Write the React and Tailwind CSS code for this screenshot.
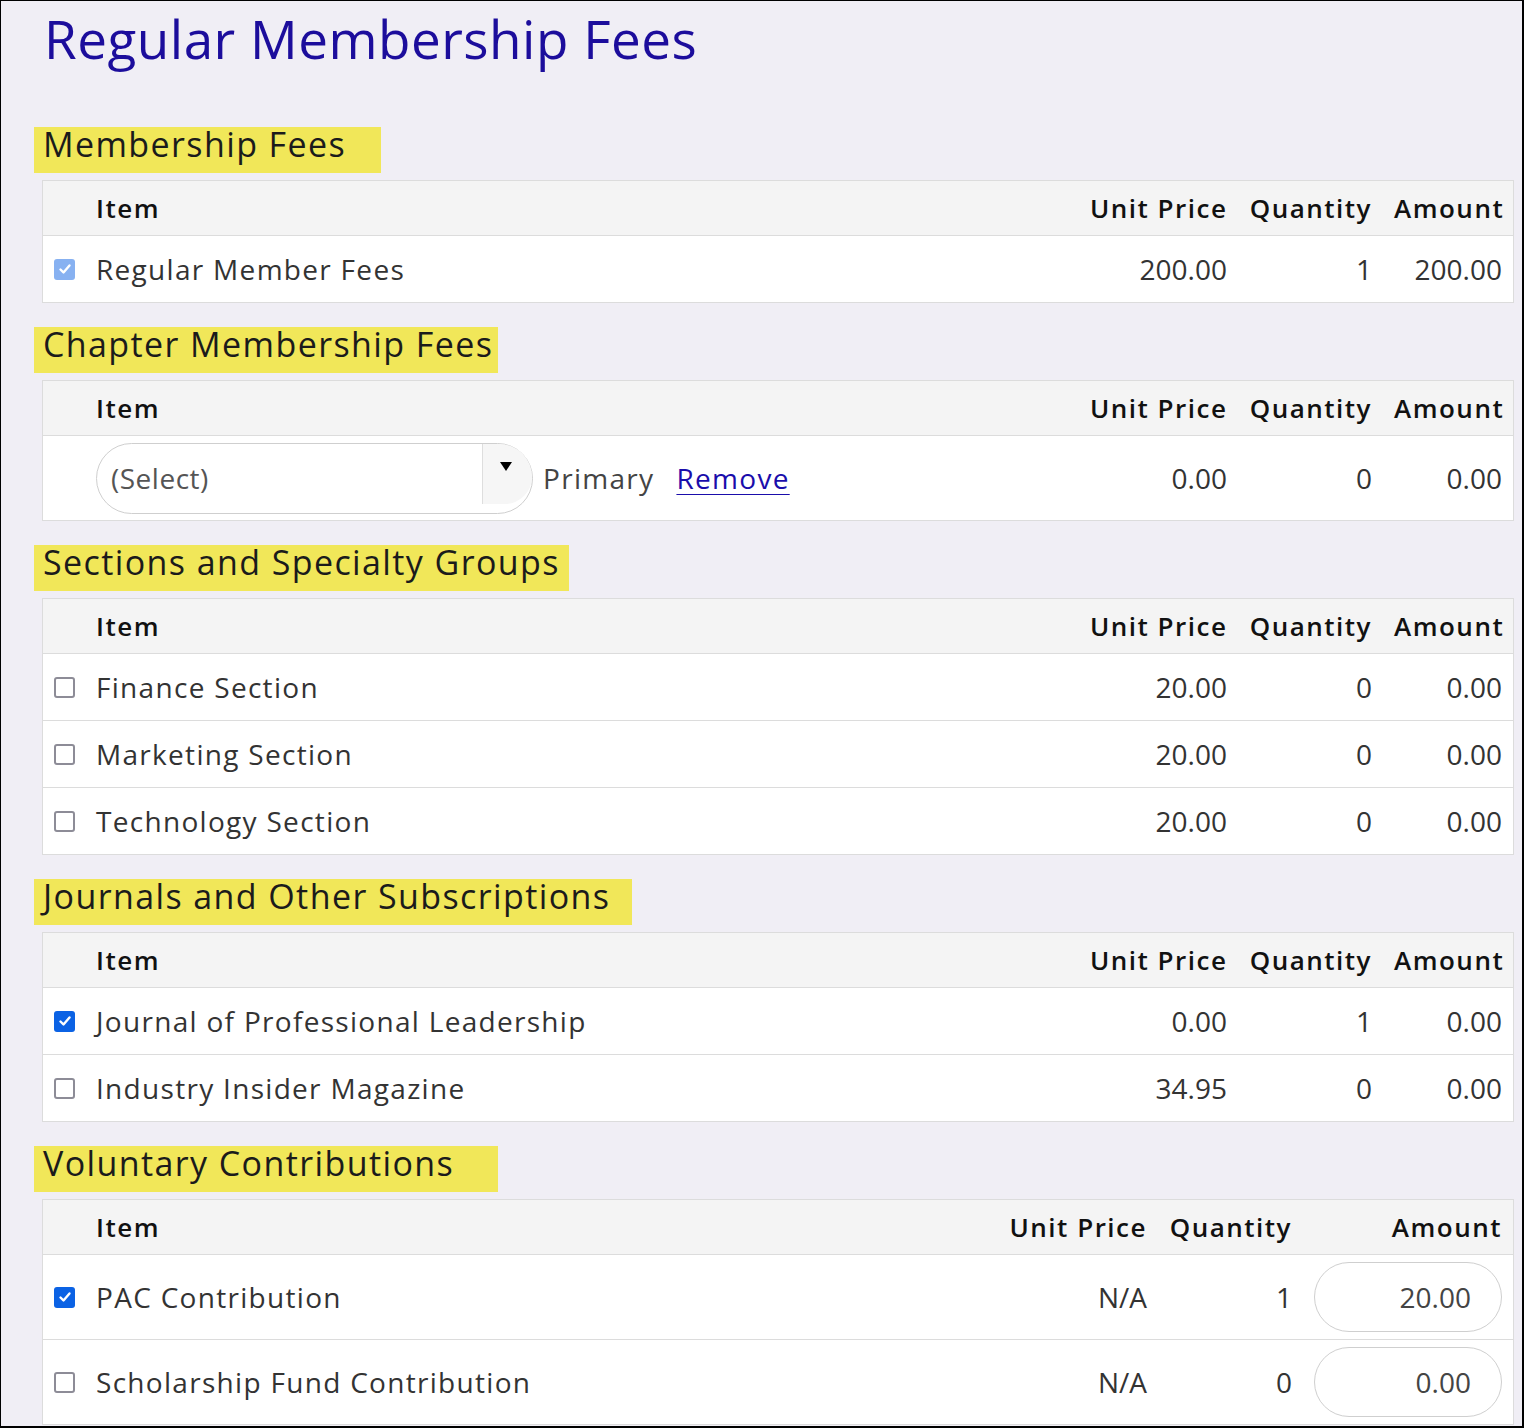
import React from "react";

const sections = [
  {
    title: "Membership Fees",
    hl: "w-[347px]",
    rows: [{ name: "Regular Member Fees", check: "disabled", price: "200.00", qty: "1", amount: "200.00" }],
  },
  {
    title: "Chapter Membership Fees",
    hl: "w-[464px]",
    select: true,
    rows: [{ price: "0.00", qty: "0", amount: "0.00" }],
  },
  {
    title: "Sections and Specialty Groups",
    hl: "w-[535px]",
    rows: [
      { name: "Finance Section", check: "off", price: "20.00", qty: "0", amount: "0.00" },
      { name: "Marketing Section", check: "off", price: "20.00", qty: "0", amount: "0.00" },
      { name: "Technology Section", check: "off", price: "20.00", qty: "0", amount: "0.00" },
    ],
  },
  {
    title: "Journals and Other Subscriptions",
    hl: "w-[598px]",
    rows: [
      { name: "Journal of Professional Leadership", check: "on", price: "0.00", qty: "1", amount: "0.00" },
      { name: "Industry Insider Magazine", check: "off", price: "34.95", qty: "0", amount: "0.00" },
    ],
  },
  {
    title: "Voluntary Contributions",
    hl: "w-[464px]",
    input: true,
    rows: [
      { name: "PAC Contribution", check: "on", price: "N/A", qty: "1", amount: "20.00" },
      { name: "Scholarship Fund Contribution", check: "off", price: "N/A", qty: "0", amount: "0.00" },
    ],
  },
];

function Checkbox({ state }) {
  if (state === "off") {
    return <div className="w-[21px] h-[21px] rounded-[3px] border-[2.5px] border-[#8d8c97] bg-white" />;
  }
  const bg = state === "on" ? "bg-[#0b62e4]" : "bg-[#87b1f1]";
  return (
    <div className={`w-[21px] h-[21px] rounded-[3px] ${bg} flex items-center justify-center`}>
      <svg width="14" height="14" viewBox="0 0 14 14" fill="none">
        <path d="M2.5 7.5l3 3 6-7" stroke="white" strokeWidth="2.4" strokeLinecap="round" strokeLinejoin="round" />
      </svg>
    </div>
  );
}

function Section({ section }) {
  const cols = section.input
    ? "grid-cols-[42px_1fr_160px_145px_210px]"
    : "grid-cols-[42px_1fr_159px_145px_130px]";
  const tall = section.select || section.input;

  return (
    <div className="mt-[24px] first:mt-0">
      <div className={`${section.hl} h-[46px] bg-[#f1e759] pl-[9px] text-[34px] leading-[46px] tracking-[1.4px] text-[#1b1b1b] whitespace-nowrap`}>
        <span className="relative top-[-6px]">{section.title}</span>
      </div>
      <div className="mt-[7px] ml-[8px] w-[1472px] border border-[#dcdcdc] bg-white">
        <div className={`grid ${cols} h-[55px] items-center bg-[#f4f4f4] border-b border-[#dcdcdc] text-[26px] font-semibold tracking-[1.5px] text-[#111] whitespace-nowrap`}>
          <div />
          <div className="px-[11px]">Item</div>
          <div className="px-[11px] text-right">Unit Price</div>
          <div className="px-[11px] text-right">Quantity</div>
          <div className="px-[11px] text-right">Amount</div>
        </div>
        {section.rows.map((row, i) => {
          const h = tall ? (i > 0 ? "h-[85px] border-t border-[#dcdcdc]" : "h-[84px]") : i > 0 ? "h-[67px] border-t border-[#dcdcdc]" : "h-[66px]";
          return (
            <div key={i} className={`grid ${cols} ${h} items-center text-[28px] text-[#333] whitespace-nowrap`}>
              <div className="pl-[11px]">{row.check && <Checkbox state={row.check} />}</div>
              <div className="px-[11px] tracking-[1.3px]">
                {section.select ? (
                  <div className="flex items-center">
                    <div className="relative w-[437px] h-[71px] rounded-[36px] border border-[#cfcfcf] bg-white flex items-center pl-[14px] text-[#555] tracking-[0.5px]">
                      (Select)
                      <div className="absolute top-0 right-0 w-[50px] h-[60px] bg-[#f6f6f6] border-l border-[#dedede] rounded-tr-[36px] rounded-br-[30px] flex items-start justify-center pt-[18px] pr-[4px]">
                        <svg width="12" height="9" viewBox="0 0 12 9">
                          <path d="M0 0h12L6 9z" fill="#000" />
                        </svg>
                      </div>
                    </div>
                    <span className="ml-[10px] text-[#444] font-medium">Primary</span>
                    <a href="#" className="ml-[22px] text-[#1a0dab] underline underline-offset-[5px] decoration-1">
                      Remove
                    </a>
                  </div>
                ) : (
                  row.name
                )}
              </div>
              <div className="px-[11px] text-right">{row.price}</div>
              <div className="px-[11px] text-right">{row.qty}</div>
              <div className="px-[11px] flex justify-end">
                {section.input ? (
                  <div className="w-[188px] h-[70px] rounded-full border border-[#cfcfcf] bg-white flex items-center justify-end pr-[30px] text-[#444]">
                    {row.amount}
                  </div>
                ) : (
                  row.amount
                )}
              </div>
            </div>
          );
        })}
      </div>
    </div>
  );
}

export default function App() {
  return (
    <div className="w-[1524px] h-[1428px] overflow-hidden bg-[#f0eef5] border-l border-t border-r-2 border-b-2 border-black font-['Open_Sans',sans-serif]">
      <h1 className="ml-[43px] mt-[11px] text-[53px] leading-none tracking-[0.5px] text-[#1c0d9c] whitespace-nowrap">
        Regular Membership Fees
      </h1>
      <div className="mt-[62px] ml-[33px]">
        {sections.map((s) => (
          <Section key={s.title} section={s} />
        ))}
      </div>
    </div>
  );
}
